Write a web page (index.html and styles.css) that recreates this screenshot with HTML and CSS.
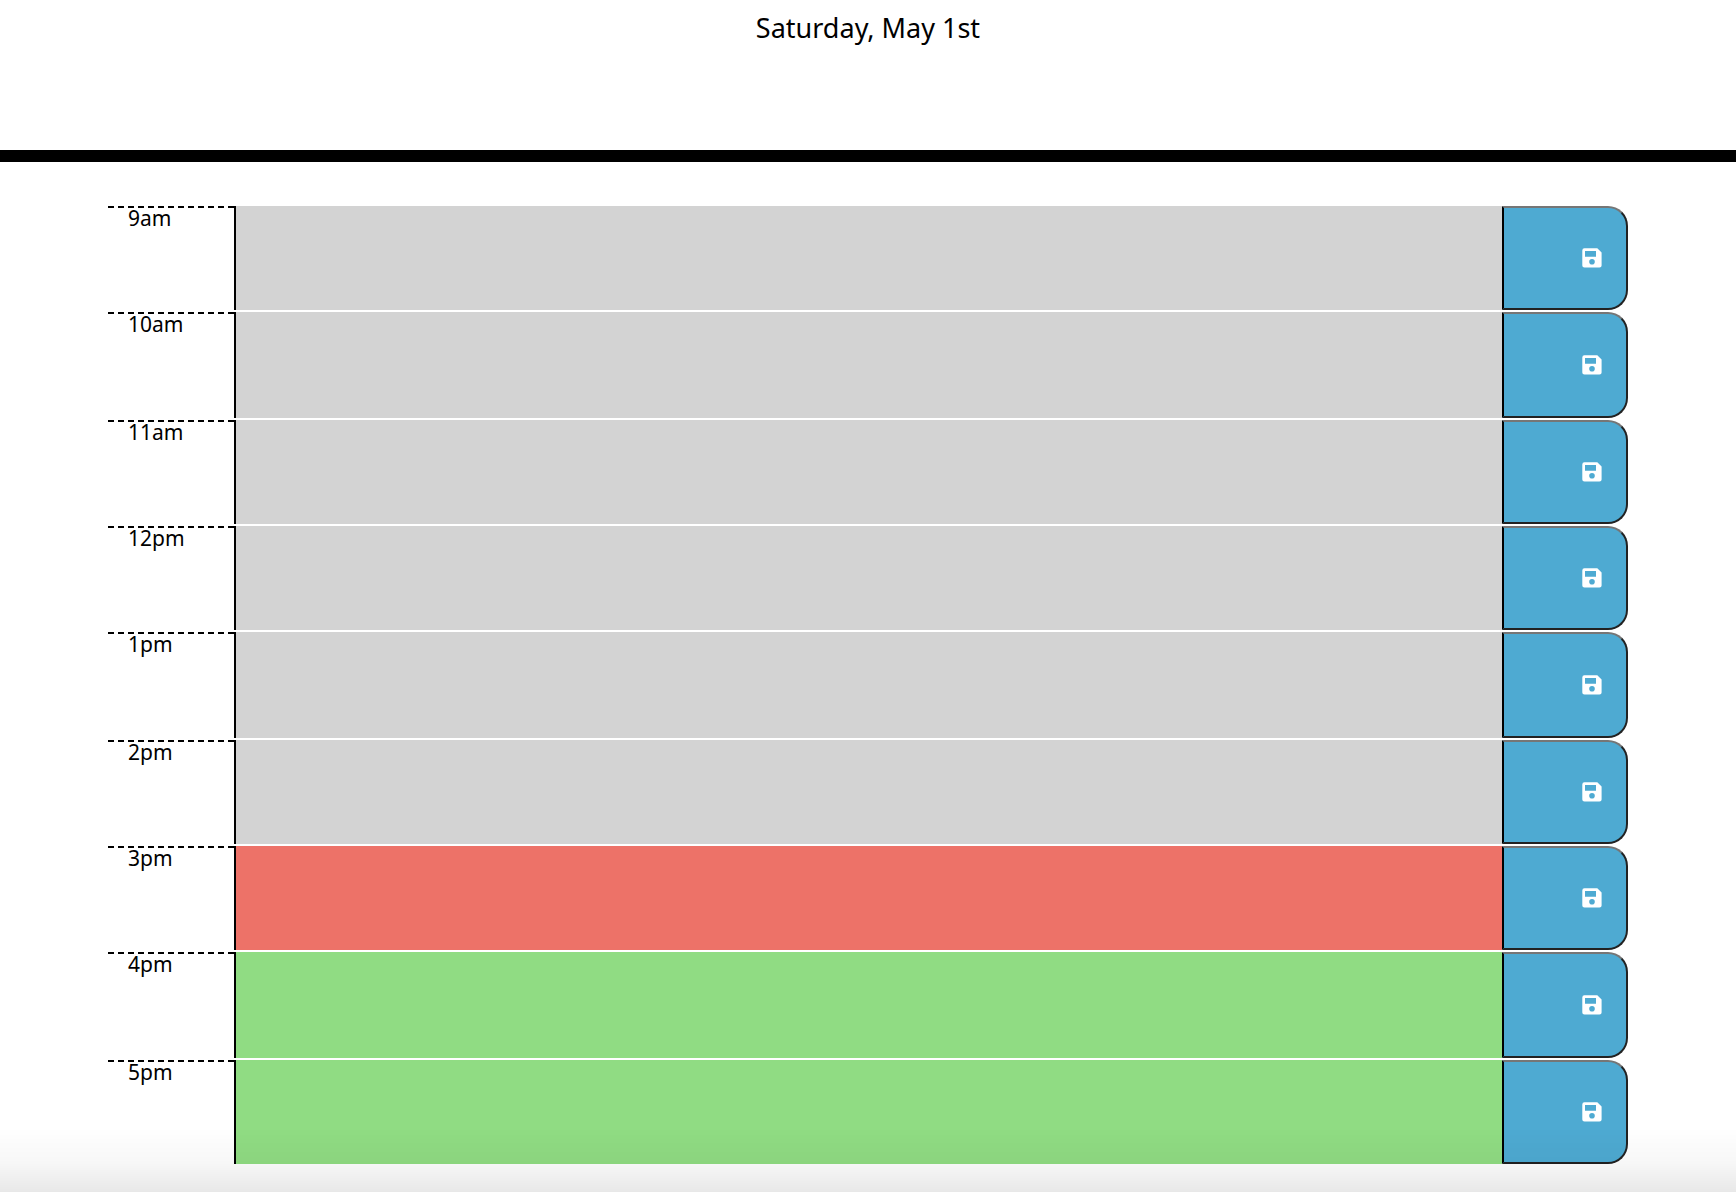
FILE: index.html
```html
<!DOCTYPE html>
<html lang="en">
<head>
<meta charset="utf-8">
<title>Work Day Scheduler</title>
<link rel="stylesheet" href="styles.css">
</head>
<body>
<svg class="sprite" aria-hidden="true">
  <symbol id="save" viewBox="0 0 20 20">
    <path fill-rule="evenodd" d="M2.4 .3H15.3L19.6 4.6V17.5a2.1 2.1 0 0 1-2.1 2.1H2.4a2.1 2.1 0 0 1-2.1-2.1V2.4a2.1 2.1 0 0 1 2.1-2.1ZM3 3V8.7H14V3ZM10 11a2.8 2.8 0 1 0 0 5.6a2.8 2.8 0 1 0 0-5.6Z"/>
  </symbol>
</svg>
<header class="header">
  <p class="date">Saturday, May 1st</p>
</header>
<main class="schedule">
  <div class="row"><label class="hour" for="h9">9am</label><textarea class="entry past" id="h9"></textarea><button class="save" aria-label="Save 9am"><svg class="icon"><use href="#save"/></svg></button></div>
  <div class="row"><label class="hour" for="h10">10am</label><textarea class="entry past" id="h10"></textarea><button class="save" aria-label="Save 10am"><svg class="icon"><use href="#save"/></svg></button></div>
  <div class="row"><label class="hour" for="h11">11am</label><textarea class="entry past" id="h11"></textarea><button class="save" aria-label="Save 11am"><svg class="icon"><use href="#save"/></svg></button></div>
  <div class="row"><label class="hour" for="h12">12pm</label><textarea class="entry past" id="h12"></textarea><button class="save" aria-label="Save 12pm"><svg class="icon"><use href="#save"/></svg></button></div>
  <div class="row"><label class="hour" for="h13">1pm</label><textarea class="entry past" id="h13"></textarea><button class="save" aria-label="Save 1pm"><svg class="icon"><use href="#save"/></svg></button></div>
  <div class="row"><label class="hour" for="h14">2pm</label><textarea class="entry past" id="h14"></textarea><button class="save" aria-label="Save 2pm"><svg class="icon"><use href="#save"/></svg></button></div>
  <div class="row"><label class="hour" for="h15">3pm</label><textarea class="entry present" id="h15"></textarea><button class="save" aria-label="Save 3pm"><svg class="icon"><use href="#save"/></svg></button></div>
  <div class="row"><label class="hour" for="h16">4pm</label><textarea class="entry future" id="h16"></textarea><button class="save" aria-label="Save 4pm"><svg class="icon"><use href="#save"/></svg></button></div>
  <div class="row"><label class="hour" for="h17">5pm</label><textarea class="entry future" id="h17"></textarea><button class="save" aria-label="Save 5pm"><svg class="icon"><use href="#save"/></svg></button></div>
</main>
<div class="fade"></div>
</body>
</html>
```
FILE: styles.css
```css
* {
  box-sizing: border-box;
}

body {
  margin: 0;
  background: #fff;
  color: #000;
  font-family: "Noto Sans", "Open Sans", sans-serif;
  font-size: 21px;
}

.sprite {
  display: none;
}

.header {
  padding: 8px 16px 102px;
  border-bottom: 12px solid #000;
  text-align: center;
}

.date {
  margin: 0;
  font-size: 27px;
  line-height: 40px;
}

.schedule {
  display: grid;
  gap: 2px;
  padding: 44px 108px 28px;
}

.row {
  display: grid;
  grid-template-columns: 126px 1fr 126px;
  min-height: 104px;
}

.row:nth-child(3n + 2) {
  min-height: 106px;
}

.hour {
  padding-left: 20px;
  border-top: 2px dashed #000;
  line-height: 20px;
}

.entry {
  width: 100%;
  height: 100%;
  padding: 4px 8px;
  border: 0;
  border-left: 2px solid #000;
  border-radius: 0;
  outline: 0;
  resize: none;
  color: #000;
  font: inherit;
}

.past {
  background: #d3d3d3;
}

.present {
  background: #ed7268;
}

.future {
  background: #90dc83;
}

.save {
  display: flex;
  align-items: center;
  justify-content: flex-end;
  padding: 0 24px 0 0;
  border: 2px solid #222;
  border-top-color: #767676;
  border-left-color: #000;
  border-radius: 0 20px 20px 0;
  background: #4eaad2;
  color: #fff;
  cursor: pointer;
}

.icon {
  width: 20px;
  height: 20px;
  fill: currentColor;
}

.fade {
  position: fixed;
  right: 0;
  bottom: 0;
  left: 0;
  height: 64px;
  background: linear-gradient(rgba(0, 0, 0, 0), rgba(0, 0, 0, 0.03) 55%, rgba(0, 0, 0, 0.09));
  pointer-events: none;
}
```
